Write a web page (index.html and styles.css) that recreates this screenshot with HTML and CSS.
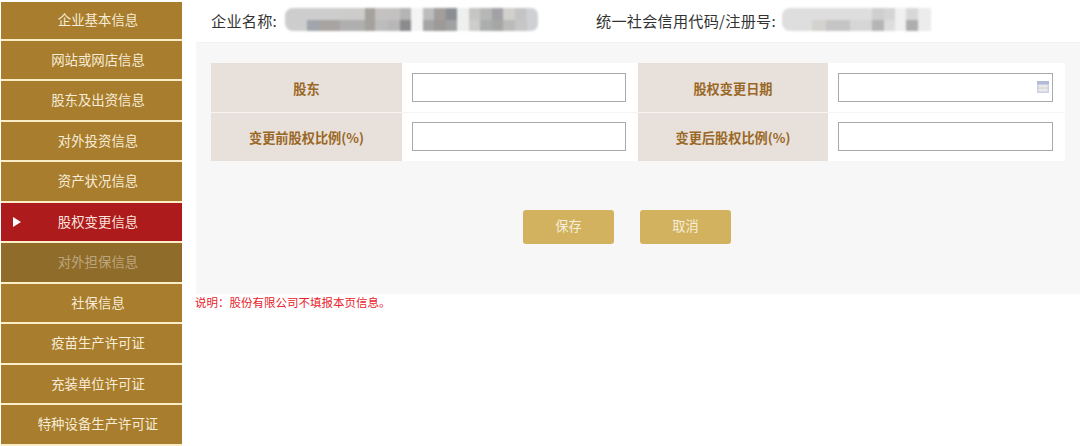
FILE: index.html
```html
<!DOCTYPE html>
<html lang="zh-CN">
<head>
<meta charset="utf-8">
<title>股权变更信息</title>
<link rel="stylesheet" href="styles.css">
</head>
<body>
<div class="page">
  <nav class="side">
    <a class="item">企业基本信息</a>
    <a class="item">网站或网店信息</a>
    <a class="item">股东及出资信息</a>
    <a class="item">对外投资信息</a>
    <a class="item">资产状况信息</a>
    <a class="item active"><span class="arrow"></span>股权变更信息</a>
    <a class="item disabled">对外担保信息</a>
    <a class="item">社保信息</a>
    <a class="item">疫苗生产许可证</a>
    <a class="item">充装单位许可证</a>
    <a class="item">特种设备生产许可证</a>
    <a class="item-end"></a>
  </nav>
  <main class="main">
    <header class="head">
      <div class="field field-name">
        <span>企业名称:</span>
        <svg class="mosaic" width="253" height="23" viewBox="0 0 253 23">
          <g>
            <rect x="0" y="0" width="68" height="23" rx="8" fill="#cdcdcd"/>
            <rect x="60" y="0" width="20" height="12" fill="#cdccca"/>
            <rect x="80" y="0" width="10" height="12" fill="#a5a19c"/>
            <rect x="90" y="0" width="25" height="12" fill="#c4c2c1"/>
            <rect x="115" y="0" width="11" height="12" fill="#b4b4b4"/>
            <rect x="22" y="12" width="13" height="11" fill="#a0a6ac"/>
            <rect x="35" y="12" width="20" height="11" fill="#a7a4a2"/>
            <rect x="55" y="12" width="25" height="11" fill="#afafaf"/>
            <rect x="80" y="12" width="10" height="11" fill="#a5a19c"/>
            <rect x="90" y="12" width="13" height="11" fill="#bcbcbc"/>
            <rect x="103" y="12" width="12" height="11" fill="#b7b7b7"/>
            <rect x="115" y="12" width="11" height="11" fill="#8b8b8e"/>
            <rect x="126" y="0" width="12" height="23" fill="#f4f4f4"/>
            <rect x="138" y="0" width="11" height="12" fill="#bcbcbe"/>
            <rect x="149" y="0" width="12" height="12" fill="#a19e9b"/>
            <rect x="161" y="0" width="11" height="12" fill="#8b8e92"/>
            <rect x="172" y="0" width="12" height="23" fill="#eef0ef"/>
            <rect x="184" y="0" width="11" height="12" fill="#c6c6c4"/>
            <rect x="195" y="0" width="12" height="12" fill="#b7b7b7"/>
            <rect x="207" y="0" width="11" height="12" fill="#a1a1a6"/>
            <rect x="218" y="0" width="12" height="12" fill="#d2d0cc"/>
            <rect x="230" y="0" width="23" height="23" rx="7" fill="#cfd0d4"/>
            <rect x="230" y="0" width="11" height="12" fill="#c4c4c6"/>
            <rect x="138" y="12" width="11" height="11" fill="#a5a5a5"/>
            <rect x="149" y="12" width="12" height="11" fill="#9c9997"/>
            <rect x="161" y="12" width="11" height="11" fill="#a1a1a3"/>
            <rect x="184" y="12" width="11" height="11" fill="#cdcdcb"/>
            <rect x="195" y="12" width="12" height="11" fill="#acaeae"/>
            <rect x="207" y="12" width="11" height="11" fill="#a6a6a6"/>
            <rect x="218" y="12" width="12" height="11" fill="#bbbbb9"/>
            <rect x="230" y="12" width="12" height="11" fill="#c6c6c6"/>
          </g>
        </svg>
      </div>
      <div class="field field-code">
        <span>统一社会信用代码/注册号:</span>
        <svg class="mosaic" width="149" height="23" viewBox="0 0 149 23">
          <rect x="0" y="0" width="95" height="23" rx="8" fill="#dedede"/>
          <rect x="90" y="0" width="12" height="12" fill="#cfcfcf"/>
          <rect x="102" y="0" width="11" height="12" fill="#d5d5d5"/>
          <rect x="113" y="0" width="11" height="23" fill="#f0f0f0"/>
          <rect x="124" y="0" width="12" height="12" fill="#d8d8d8"/>
          <rect x="136" y="0" width="13" height="23" fill="#ececec"/>
          <rect x="30" y="12" width="14" height="11" fill="#d4d2ce"/>
          <rect x="44" y="12" width="24" height="11" fill="#c5c5c5"/>
          <rect x="68" y="12" width="22" height="11" fill="#d6d6d6"/>
          <rect x="90" y="12" width="12" height="11" fill="#b5b5b5"/>
          <rect x="102" y="12" width="11" height="11" fill="#dddddd"/>
          <rect x="124" y="12" width="12" height="11" fill="#aeaeae"/>
        </svg>
      </div>
    </header>
    <section class="panel">
      <div class="form">
        <label class="lab">股东</label>
        <div class="cell"><input class="inp" type="text"></div>
        <label class="lab">股权变更日期</label>
        <div class="cell cell-date">
          <input class="inp" type="text">
          <svg class="cal" width="12" height="12" viewBox="0 0 12 12">
            <rect width="12" height="12" fill="#c3c6e0"/>
            <rect x="0" y="0" width="12" height="3" fill="#a9add2"/>
            <rect x="1.5" y="4" width="9" height="6.5" fill="#e6e6e4"/>
            <rect x="1.5" y="6.5" width="9" height="1" fill="#c9c9c4"/>
          </svg>
        </div>
        <label class="lab">变更前股权比例(%)</label>
        <div class="cell"><input class="inp" type="text"></div>
        <label class="lab">变更后股权比例(%)</label>
        <div class="cell"><input class="inp" type="text"></div>
      </div>
      <div class="actions">
        <button class="btn" type="button">保存</button>
        <button class="btn" type="button">取消</button>
      </div>
    </section>
    <p class="note">说明：股份有限公司不填报本页信息。</p>
  </main>
</div>
</body>
</html>
```

FILE: styles.css
```css
html, body {
  margin: 0;
  padding: 0;
  height: 446px;
  overflow: hidden;
  background: #fff;
  font-family: "Noto Sans CJK SC", "Noto Sans", sans-serif;
}
.page {
  display: flex;
  align-items: flex-start;
  height: 446px;
  overflow: hidden;
}
.side {
  width: 181px;
  height: 446px;
  margin-left: 1px;
  padding-top: 1.5px;
  box-sizing: border-box;
  display: flex;
  flex-direction: column;
  flex: none;
}
.item {
  position: relative;
  display: block;
  flex: none;
  height: 38.5px;
  border-bottom: 2px solid #fbeec6;
  padding-left: 13px;
  background: #a87d2d;
  color: #f7ecd6;
  font-size: 13.4px;
  line-height: 37px;
  text-align: center;
}
.item:first-child {
  height: 37px;
  line-height: 34px;
}
.item-end {
  display: block;
  flex: none;
  height: 0.5px;
  background: #a87d2d;
}
.active {
  background: #ae1b1c;
  color: #f9e3dc;
}
.disabled {
  background: #8f6c2a;
  color: #bda67e;
}
.arrow {
  position: absolute;
  left: 12px;
  top: 14px;
  width: 0;
  height: 0;
  border-left: 8px solid #fff;
  border-top: 5px solid transparent;
  border-bottom: 5px solid transparent;
}
.main {
  flex: 1;
  margin-left: 14px;
  min-width: 0;
}
.head {
  display: flex;
  height: 42px;
  padding-left: 15px;
  border-bottom: 1px solid #f2f2f2;
  color: #333;
  font-size: 15.2px;
  box-sizing: content-box;
}
.field {
  display: flex;
  align-items: center;
  height: 40px;
}
.field span {
  white-space: nowrap;
  letter-spacing: 0.2px;
}
.mosaic {
  display: block;
  flex: none;
  margin-top: -1px;
  filter: blur(0.8px);
}
.field-name {
  width: 385px;
  gap: 8px;
}
.field-code {
  gap: 6px;
}
.panel {
  height: 251px;
  padding: 20px 15px 0;
  background: #f7f7f7;
  box-sizing: border-box;
}
.form {
  display: grid;
  grid-template-columns: 191px 236px 190px 237px;
  grid-auto-rows: 48.5px;
  row-gap: 1px;
  background: #f8f4f1;
}
.lab {
  display: flex;
  align-items: center;
  justify-content: center;
  padding-top: 2px;
  box-sizing: border-box;
  background: #e8e0da;
  color: #9a6826;
  font-size: 13.2px;
  font-weight: 700;
}
.cell {
  position: relative;
  display: flex;
  align-items: center;
  padding: 0 12px 0 10px;
  background: #fff;
}
.inp {
  display: block;
  width: 100%;
  height: 29px;
  margin: 0;
  padding: 0 4px;
  border: 1px solid #aaaaaa;
  background: #fff;
  box-sizing: border-box;
  outline: none;
}
.cal {
  position: absolute;
  right: 16px;
  top: 18px;
  opacity: 0.85;
}
.actions {
  display: flex;
  justify-content: center;
  gap: 26px;
  margin-top: 49px;
  padding-right: 22px;
}
.btn {
  width: 91px;
  height: 34px;
  border: 0;
  border-radius: 3px;
  background: #d2b25f;
  color: #f6eed9;
  font-family: inherit;
  font-size: 13.2px;
  padding: 0 0 4px;
}
.note {
  margin: 0 0 0 -1px;
  color: #e8222a;
  font-size: 11.5px;
  line-height: 16px;
}
```
